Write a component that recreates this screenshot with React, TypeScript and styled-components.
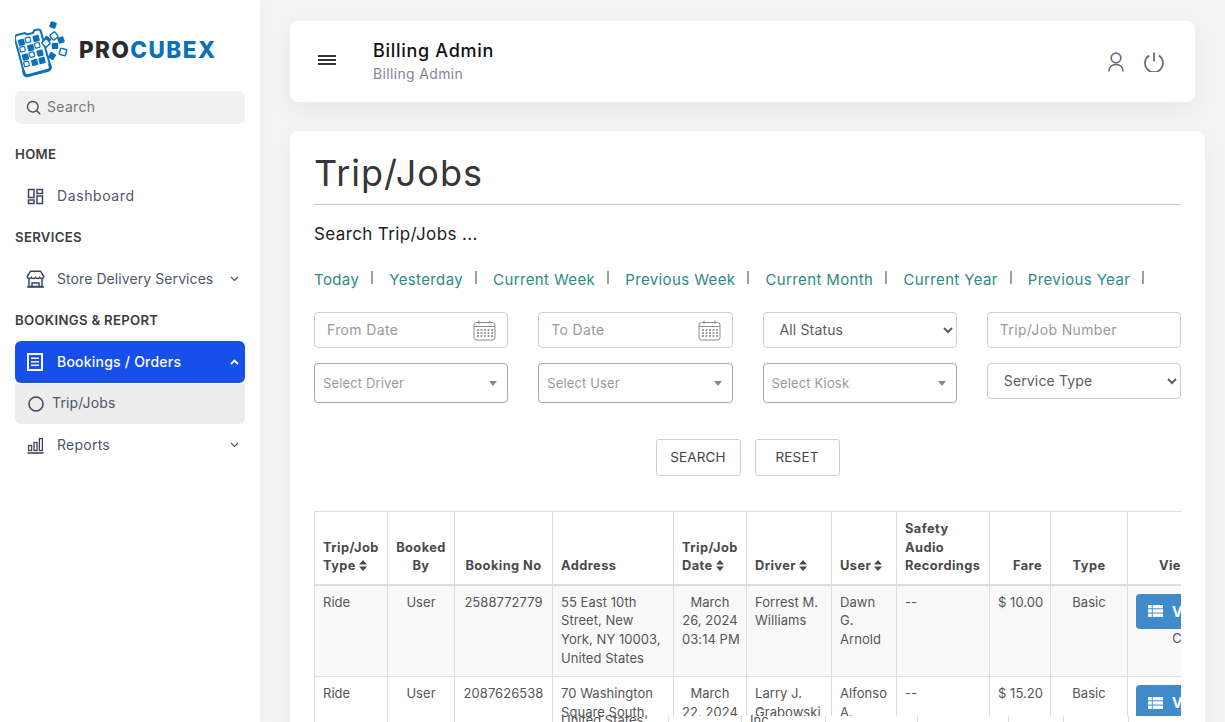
import React from "react";
import styled, { createGlobalStyle } from "styled-components";

const FONT = `Inter, "Noto Sans", "Liberation Sans", sans-serif`;

const Global = createGlobalStyle`
  html, body { margin: 0; padding: 0; height: 100%; overflow: hidden; background: #f3f3f3; }
  * { box-sizing: border-box; }
  body { font-family: ${FONT}; }
`;

const Page = styled.div`
  display: flex;
  width: 100%;
  height: 722px;
  overflow: hidden;
  background: #f3f3f3;
`;

const Sidebar = styled.aside`
  flex: 0 0 260px;
  background: #fff;
  padding: 20px 15px 0;
  box-shadow: 2px 0 12px rgba(0, 0, 0, 0.02);
`;

const LogoRow = styled.div`
  display: flex;
  align-items: center;
  height: 60px;
  gap: 10px;
`;

const LogoText = styled.span`
  font-weight: 800;
  font-size: 22.5px;
  letter-spacing: 1.45px;
  color: #2a2a2a;
  margin-top: -2px;
  & b { color: #0a70b8; font-weight: 800; }
`;

const SearchBox = styled.div`
  display: flex;
  align-items: center;
  gap: 6px;
  height: 33px;
  margin-top: 11px;
  margin-bottom: 20px;
  padding: 0 0 2px 11px;
  border-radius: 6px;
  background: #f1f1f1;
  color: #777;
  font-size: 14px;
  letter-spacing: 0.3px;
`;

const NavGroup = styled.div`
  margin-bottom: 10px;
`;

const SectionLabel = styled.div`
  height: 20px;
  line-height: 20px;
  margin-bottom: 11px;
  font-size: 13.2px;
  font-weight: 600;
  letter-spacing: 0.3px;
  color: #3d3d3d;
`;

const NavRow = styled.div<{ $active?: boolean }>`
  display: flex;
  align-items: center;
  height: 42px;
  padding: 0 6px 0 11px;
  gap: 11px;
  border-radius: 6px;
  font-size: 14px;
  font-weight: ${(p) => (p.$active ? 500 : 400)};
  letter-spacing: ${(p) => (p.$active ? "0.22px" : "0.08px")};
  color: ${(p) => (p.$active ? "#fff" : "#4f5768")};
  background: ${(p) => (p.$active ? "#174feb" : "transparent")};
`;

const NavLabel = styled.div<{ $spacing?: string }>`
  flex: 1;
  margin-top: -2px;
  white-space: nowrap;
  ${(p) => (p.$spacing ? `letter-spacing: ${p.$spacing};` : "")}
`;

const SubRow = styled.div`
  display: flex;
  align-items: center;
  height: 40px;
  margin-top: 1px;
  padding-left: 13px;
  gap: 8px;
  background: #ececec;
  border-radius: 0 0 6px 6px;
  color: #4f5768;
  font-size: 14px;
  letter-spacing: 0.15px;
`;

const SubLabel = styled.div`
  margin-top: -3px;
`;

const Main = styled.main`
  flex: 1;
  min-width: 0;
  padding: 21px 20px 0 30px;
`;

const HeaderCard = styled.header`
  display: flex;
  align-items: center;
  height: 81px;
  margin-right: 10px;
  padding: 0 31px 0 28px;
  background: #fff;
  border-radius: 8px;
  box-shadow: 0 8px 24px rgba(0, 0, 0, 0.05);
`;

const Burger = styled.div`
  width: 18px;
  height: 10px;
  margin-right: 37px;
  margin-top: -3px;
  display: flex;
  flex-direction: column;
  justify-content: space-between;
  & i { display: block; height: 2px; background: #333; }
`;

const HeaderText = styled.div`
  flex: 1;
`;

const HeaderTitle = styled.div`
  font-size: 18px;
  line-height: 24px;
  font-weight: 500;
  letter-spacing: 0.7px;
  color: #111;
`;

const HeaderSub = styled.div`
  font-size: 14px;
  line-height: 22px;
  color: #85859a;
  letter-spacing: 0.35px;
`;

const HeaderIcons = styled.div`
  display: flex;
  align-items: center;
  gap: 20px;
  color: #6b6b80;
`;

const Card = styled.section`
  position: relative;
  height: 640px;
  margin-top: 29px;
  padding: 0 24px;
  background: #fff;
  border-radius: 8px 8px 0 0;
  box-shadow: 0 8px 24px rgba(0, 0, 0, 0.04);
`;

const Title = styled.h1`
  margin: 0;
  height: 74px;
  padding-top: 19px;
  line-height: 46px;
  font-size: 36px;
  font-weight: 400;
  letter-spacing: 1px;
  color: #363636;
  border-bottom: 1px solid #c9c9c9;
`;

const SearchHeading = styled.div`
  margin-top: 17px;
  height: 24px;
  line-height: 24px;
  font-size: 17px;
  letter-spacing: 0.38px;
  color: #1c1c1c;
`;

const QuickLinks = styled.nav`
  display: flex;
  align-items: center;
  margin-top: 22px;
  height: 24px;
  font-size: 15px;
  letter-spacing: 0.38px;
  color: #2f8a83;
`;

const QuickLink = styled.a`
  padding-right: 12px;
  margin-top: -1px;
  white-space: nowrap;
`;

const Sep = styled.i`
  display: block;
  width: 2px;
  height: 13px;
  margin: -5px 16px 0 0;
  background: #a0a0a0;
`;

const FilterGrid = styled.div`
  display: grid;
  grid-template-columns: repeat(4, 1fr);
  column-gap: 30px;
  row-gap: 15px;
  margin-top: 20px;
  align-items: start;
`;

const TextField = styled.div`
  display: flex;
  align-items: center;
  justify-content: space-between;
  height: 36px;
  padding: 0 11px 0 12px;
  border: 1px solid #cfcfcf;
  border-radius: 4px;
  font-size: 14px;
  letter-spacing: 0.35px;
  color: #9a9a9a;
`;

const FieldLabel = styled.div`
  margin-top: -2px;
`;

const NativeSelect = styled.select`
  width: 100%;
  height: 36px;
  padding: 0 0 2px 12px;
  border: 1px solid #cfcfcf;
  border-radius: 4px;
  background: #fff;
  font-family: ${FONT};
  font-size: 14px;
  letter-spacing: 0.15px;
  color: #5c5c5c;
  outline: none;
`;

const Select2 = styled.div`
  display: flex;
  align-items: center;
  justify-content: space-between;
  height: 40px;
  padding: 0 10px 0 8px;
  border: 1px solid #a9a9a9;
  border-radius: 4px;
  font-size: 13px;
  letter-spacing: 0.15px;
  color: #9a9a9a;
  &::after {
    content: "";
    border-left: 4px solid transparent;
    border-right: 4px solid transparent;
    border-top: 5px solid #888;
  }
`;

const Actions = styled.div`
  display: flex;
  justify-content: center;
  gap: 14px;
  margin-top: 36px;
`;

const ActionButton = styled.button`
  height: 37px;
  width: 85px;
  padding: 0 0 2px;
  background: #fff;
  border: 1px solid #cfcfcf;
  border-radius: 3px;
  font-family: ${FONT};
  font-size: 13.5px;
  letter-spacing: 0.15px;
  color: #444;
`;

const TableWrap = styled.div`
  margin-top: 35px;
  height: 300px;
  overflow: hidden;
`;

const Table = styled.table`
  border-collapse: collapse;
  table-layout: fixed;
  width: 923px;
  font-size: 13px;
  line-height: 18.6px;
  color: #555;
`;

const Th = styled.th<{ $align?: string }>`
  padding: 8px;
  border: 1px solid #ddd;
  border-bottom-width: 2px;
  vertical-align: bottom;
  text-align: ${(p) => p.$align || "left"};
  font-weight: 700;
  font-size: 12.8px;
  letter-spacing: 0.45px;
  color: #4a4a4a;
`;

const ViewTh = styled(Th)`
  padding-right: 22px;
`;

const Td = styled.td<{ $align?: string }>`
  padding: 7px 8px 9px;
  border: 1px solid #ddd;
  vertical-align: top;
  text-align: ${(p) => p.$align || "left"};
  letter-spacing: 0.05px;
`;

const NoWrapTd = styled(Td)`
  white-space: nowrap;
`;

const ViewTd = styled(Td)`
  padding-top: 8px;
`;

const Row = styled.tr<{ $striped?: boolean }>`
  background: ${(p) => (p.$striped ? "#f9f9f9" : "#fff")};
`;

const ViewButton = styled.button`
  display: flex;
  align-items: center;
  gap: 9px;
  width: 92px;
  height: 35px;
  padding: 0 0 0 12px;
  border: 0;
  border-radius: 4px;
  background: #428bca;
  color: #fff;
  font-family: ${FONT};
  font-weight: 700;
  font-size: 14px;
`;

const ViewNote = styled.div`
  text-align: center;
  line-height: 18px;
  padding-left: 12px;
`;

const ClippedStrip = styled.div`
  position: absolute;
  left: 24px;
  right: 24px;
  top: 585px;
  height: 20px;
  display: flex;
  font-size: 13px;
  line-height: 18px;
  color: #555;
`;

const StripSpacer = styled.div`
  width: 354px;
  padding-left: 247px;
  margin-top: -5px;
`;

const StripCells = styled.div`
  flex: 1;
  display: flex;
  background: #fff;
`;

const StripCell = styled.div<{ $w?: number }>`
  flex: ${(p) => (p.$w ? `0 0 ${p.$w}px` : "1")};
  padding-left: 8px;
  border-left: 1px solid #ddd;
  & span { display: block; margin-top: -5px; }
`;

const LogoMark = () => {
  const cells: React.ReactElement[] = [];
  const outlined = new Set(["0-1", "1-0", "1-2", "2-1", "3-0"]);
  for (let r = 0; r < 4; r++) {
    for (let c = 0; c < 3; c++) {
      const hollow = outlined.has(`${r}-${c}`);
      cells.push(
        <rect
          key={`${r}-${c}`}
          x={20.2 + c * 7.6}
          y={36 + r * 7.6}
          width={hollow ? 5 : 6.4}
          height={hollow ? 5 : 6.4}
          rx={1}
          fill={hollow ? "#fff" : "#0a70b8"}
          stroke="#0a70b8"
          strokeWidth={hollow ? 1.2 : 0}
        />
      );
    }
  }
  const loose: [number, number, boolean][] = [
    [52, 25, true], [46, 40, true], [53, 36, false], [60, 40, true], [54, 46, true],
    [62, 52, false], [51, 56, true], [45, 43, false],
  ];
  return (
    <svg width="54" height="60" viewBox="14 20 54 60" aria-hidden="true">
      <g transform="rotate(-15 34 52)">
        <path
          d="M21 31h8l2 2h6l2-2h3a3 3 0 0 1 3 3v36a3 3 0 0 1-3 3H21a3 3 0 0 1-3-3V34a3 3 0 0 1 3-3z"
          fill="#fff"
          stroke="#0a70b8"
          strokeWidth="2"
        />
        <path d="M18 67v3a3 3 0 0 0 3 3h21a3 3 0 0 0 3-3v-3" fill="none" stroke="#0a70b8" strokeWidth="3" />
        {cells}
      </g>
      {loose.map(([x, y, on], i) => (
        <rect
          key={i}
          x={x - 3.2}
          y={y - 3.2}
          width={6.4}
          height={6.4}
          rx={1}
          transform={`rotate(${i * 17 + 20} ${x} ${y})`}
          fill={on ? "#0a70b8" : "#fff"}
          stroke="#0a70b8"
          strokeWidth={on ? 0 : 1.4}
        />
      ))}
    </svg>
  );
};

const stroke = { fill: "none", stroke: "currentColor", strokeWidth: 1.5 } as const;

const SearchGlyph = styled.svg`
  margin-top: 2px;
`;

const SearchIcon = () => (
  <SearchGlyph width="15" height="15" viewBox="0 0 15 15" fill="none" stroke="#444" strokeWidth="1.3">
    <circle cx="6.8" cy="6.8" r="5.3" />
    <path d="M10.8 10.8l3 3" strokeLinecap="round" />
  </SearchGlyph>
);

const IconBox = styled.span<{ $light?: boolean }>`
  flex: 0 0 20px;
  display: flex;
  justify-content: center;
  margin-left: -1px;
  margin-right: 1px;
  color: ${(p) => (p.$light ? "#fff" : "#3c4660")};
`;

const DashIcon = () => (
  <svg width="17" height="17" viewBox="0 0 17 17" {...stroke}>
    <rect x="1.5" y="1.5" width="5.5" height="8" />
    <rect x="10" y="1.5" width="5.5" height="4" />
    <rect x="1.5" y="12" width="5.5" height="3.5" />
    <rect x="10" y="8" width="5.5" height="7.5" />
  </svg>
);

const StoreIcon = () => (
  <svg width="19" height="18" viewBox="0 0 19 18" {...stroke}>
    <path d="M4.5 1.2h10l3.3 5.3c0 2-3 2.8-4.1.9-1 1.6-3 1.6-4.2 0-1.2 1.6-3.2 1.6-4.2 0-1.1 1.9-4.1 1.1-4.1-.9z" />
    <path d="M3 9v7.5h13V9" />
    <path d="M6 16.5v-3.5h7v3.5" />
    <path d="M1 17h17" />
  </svg>
);

const DocIcon = () => (
  <svg width="16" height="18" viewBox="0 0 16 18">
    <path
      fillRule="evenodd"
      d="M0 0h16v18H0zM2 2v14h12V2zM4 4.5h8V6H4zM4 8h8v1.5H4zM4 11.5h8V13H4z"
      fill="currentColor"
    />
  </svg>
);

const ChartIcon = () => (
  <svg width="17" height="17" viewBox="0 0 17 17" {...stroke} strokeWidth="1.3">
    <rect x="1.6" y="8.5" width="3" height="5" />
    <rect x="7" y="5.5" width="3" height="8" />
    <rect x="12.4" y="1.5" width="3" height="12" />
    <path d="M0.5 16h16" strokeWidth="1.6" />
  </svg>
);

const Chevron = ({ up, color }: { up?: boolean; color: string }) => (
  <svg width="9" height="6" viewBox="0 0 9 6" fill="none" stroke={color} strokeWidth={up ? 1.8 : 1.2}>
    <path d={up ? "M1 5l3.5-3.5L8 5" : "M1 1l3.5 3.5L8 1"} />
  </svg>
);

const RingIcon = () => (
  <svg width="16" height="16" viewBox="0 0 16 16" fill="none" stroke="#3c4660" strokeWidth="1.5">
    <circle cx="8" cy="8" r="7" />
  </svg>
);

const UserIcon = () => (
  <svg width="16" height="20" viewBox="0 0 16 20" {...stroke} strokeWidth="1.7">
    <circle cx="8" cy="6" r="4.8" />
    <path d="M1 19.5c0-4.5 3-7 7-7s7 2.5 7 7" />
  </svg>
);

const PowerIcon = () => (
  <svg width="20" height="20" viewBox="0 0 20 20" {...stroke} strokeWidth="1.8">
    <path d="M10 0.5v9" />
    <path d="M5.2 3.5a9 9 0 1 0 9.6 0" />
  </svg>
);

const CalendarIcon = () => (
  <svg width="23" height="21" viewBox="0 0 23 21" fill="none" stroke="#8c8c8c" strokeWidth="1">
    <rect x="1" y="2.5" width="21" height="17.5" rx="2.5" />
    <path d="M1 6.5h21M6 0.5v3.5M17 0.5v3.5" />
    <g fill="#8c8c8c" stroke="none">
      {[10, 13, 16].map((y) =>
        [5, 8.5, 12, 15.5, 19].map((x) => <rect key={`${x}${y}`} x={x - 0.9} y={y - 0.9} width={1.8} height={1.8} />)
      )}
    </g>
  </svg>
);

const SortGlyph = styled.svg`
  margin-left: 3px;
  vertical-align: -1px;
`;

const SortIcon = () => (
  <SortGlyph width="8" height="11" viewBox="0 0 8 11" fill="#4a4a4a">
    <path d="M4 0l4 4.5H0zM4 11L0 6.5h8z" />
  </SortGlyph>
);

const ListIcon = () => (
  <svg width="15" height="12" viewBox="0 0 15 12" fill="#fff">
    {[0, 4.3, 8.6].map((y) => (
      <g key={y}>
        <rect x="0" y={y} width="3.8" height="3.3" />
        <rect x="4.7" y={y} width="10.3" height="3.3" />
      </g>
    ))}
  </svg>
);

type Rec = {
  no: string;
  address: string;
  date: string[];
  driver: string;
  user: string;
  fare: string;
  note: string;
};

const rows: Rec[] = [
  {
    no: "2588772779",
    address: "55 East 10th Street, New York, NY 10003, United States",
    date: ["March", "26, 2024", "03:14 PM"],
    driver: "Forrest M. Williams",
    user: "Dawn G. Arnold",
    fare: "$ 10.00",
    note: "Copy",
  },
  {
    no: "2087626538",
    address: "70 Washington Square South, New York, NY 10012, United States",
    date: ["March", "22, 2024", "11:05 AM"],
    driver: "Larry J. Grabowski",
    user: "Alfonso A. Moore",
    fare: "$ 15.20",
    note: "Copy",
  },
];

const widths = [73, 67, 98, 121, 73, 85, 65, 93, 61, 77, 110];

export default function App() {
  return (
    <Page>
      <Global />
      <Sidebar>
        <LogoRow>
          <LogoMark />
          <LogoText>
            PRO<b>CUBEX</b>
          </LogoText>
        </LogoRow>
        <SearchBox>
          <SearchIcon />
          Search
        </SearchBox>
        <NavGroup>
          <SectionLabel>HOME</SectionLabel>
          <NavRow>
            <IconBox>
              <DashIcon />
            </IconBox>
            <NavLabel $spacing="0.6px">Dashboard</NavLabel>
          </NavRow>
        </NavGroup>
        <NavGroup>
          <SectionLabel>SERVICES</SectionLabel>
          <NavRow>
            <IconBox>
              <StoreIcon />
            </IconBox>
            <NavLabel>Store Delivery Services</NavLabel>
            <Chevron color="#555" />
          </NavRow>
        </NavGroup>
        <NavGroup>
          <SectionLabel>BOOKINGS &amp; REPORT</SectionLabel>
          <NavRow $active>
            <IconBox $light>
              <DocIcon />
            </IconBox>
            <NavLabel>Bookings / Orders</NavLabel>
            <Chevron up color="#fff" />
          </NavRow>
          <SubRow>
            <RingIcon />
            <SubLabel>Trip/Jobs</SubLabel>
          </SubRow>
          <NavRow>
            <IconBox>
              <ChartIcon />
            </IconBox>
            <NavLabel $spacing="0.25px">Reports</NavLabel>
            <Chevron color="#555" />
          </NavRow>
        </NavGroup>
      </Sidebar>
      <Main>
        <HeaderCard>
          <Burger>
            <i />
            <i />
            <i />
          </Burger>
          <HeaderText>
            <HeaderTitle>Billing Admin</HeaderTitle>
            <HeaderSub>Billing Admin</HeaderSub>
          </HeaderText>
          <HeaderIcons>
            <UserIcon />
            <PowerIcon />
          </HeaderIcons>
        </HeaderCard>
        <Card>
          <Title>Trip/Jobs</Title>
          <SearchHeading>Search Trip/Jobs ...</SearchHeading>
          <QuickLinks>
            {["Today", "Yesterday", "Current Week", "Previous Week", "Current Month", "Current Year", "Previous Year"].map(
              (l) => (
                <React.Fragment key={l}>
                  <QuickLink>{l}</QuickLink>
                  <Sep />
                </React.Fragment>
              )
            )}
          </QuickLinks>
          <FilterGrid>
            <TextField>
              <FieldLabel>From Date</FieldLabel>
              <CalendarIcon />
            </TextField>
            <TextField>
              <FieldLabel>To Date</FieldLabel>
              <CalendarIcon />
            </TextField>
            <NativeSelect defaultValue="All Status">
              <option>All Status</option>
            </NativeSelect>
            <TextField>
              <FieldLabel>Trip/Job Number</FieldLabel>
            </TextField>
            <Select2>Select Driver</Select2>
            <Select2>Select User</Select2>
            <Select2>Select Kiosk</Select2>
            <NativeSelect defaultValue="Service Type">
              <option>Service Type</option>
            </NativeSelect>
          </FilterGrid>
          <Actions>
            <ActionButton>SEARCH</ActionButton>
            <ActionButton>RESET</ActionButton>
          </Actions>
          <TableWrap>
            <Table>
              <colgroup>
                {widths.map((w, i) => (
                  <col key={i} width={w} />
                ))}
              </colgroup>
              <thead>
                <tr>
                  <Th>
                    Trip/Job Type
                    <SortIcon />
                  </Th>
                  <Th $align="center">Booked By</Th>
                  <Th $align="center">Booking No</Th>
                  <Th>Address</Th>
                  <Th>
                    Trip/Job Date
                    <SortIcon />
                  </Th>
                  <Th>
                    Driver
                    <SortIcon />
                  </Th>
                  <Th>
                    User
                    <SortIcon />
                  </Th>
                  <Th>Safety Audio Recordings</Th>
                  <Th $align="right">Fare</Th>
                  <Th $align="center">Type</Th>
                  <ViewTh $align="center">View</ViewTh>
                </tr>
              </thead>
              <tbody>
                {rows.map((r, i) => (
                  <Row key={r.no} $striped={i === 0}>
                    <Td>Ride</Td>
                    <Td $align="center">User</Td>
                    <Td $align="center">{r.no}</Td>
                    <Td>{r.address}</Td>
                    <NoWrapTd $align="center">
                      {r.date.map((d) => (
                        <div key={d}>{d}</div>
                      ))}
                    </NoWrapTd>
                    <Td>{r.driver}</Td>
                    <Td>{r.user}</Td>
                    <Td>--</Td>
                    <NoWrapTd $align="right">{r.fare}</NoWrapTd>
                    <Td $align="center">Basic</Td>
                    <ViewTd>
                      <ViewButton>
                        <ListIcon />
                        View
                      </ViewButton>
                      <ViewNote>{r.note}</ViewNote>
                    </ViewTd>
                  </Row>
                ))}
              </tbody>
            </Table>
          </TableWrap>
          <ClippedStrip>
            <StripSpacer>United States</StripSpacer>
            <StripCells>
              <StripCell $w={73} />
              <StripCell $w={84}>
                <span>Inc</span>
              </StripCell>
              <StripCell $w={92} />
              <StripCell $w={91} />
              <StripCell $w={55} />
              <StripCell $w={65} />
              <StripCell />
            </StripCells>
          </ClippedStrip>
        </Card>
      </Main>
    </Page>
  );
}
